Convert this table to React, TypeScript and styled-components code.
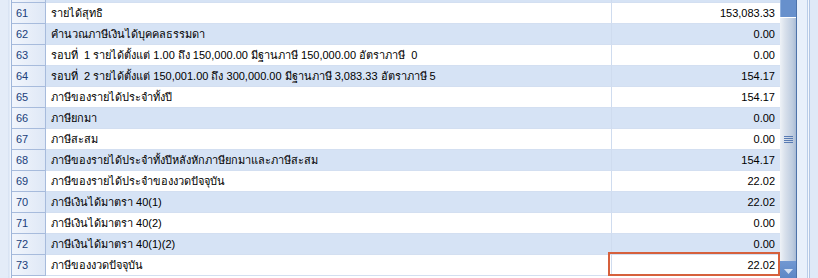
import React from 'react';
import styled, { createGlobalStyle } from 'styled-components';

const GlobalStyle = createGlobalStyle`
  html, body {
    margin: 0;
    padding: 0;
    background: #ffffff;
    overflow: hidden;
  }
  body {
    font-family: Tahoma, "Liberation Sans", "DejaVu Sans", sans-serif;
    font-size: 11px;
  }
`;

interface TaxRow {
  no: number;
  label: string;
  amount: string;
  editing?: boolean;
}

// row 60 only peeks in at the top edge, so it carries no text
const rows: TaxRow[] = [
  { no: 60, label: '', amount: '' },
  { no: 61, label: 'รายได้สุทธิ', amount: '153,083.33' },
  { no: 62, label: 'คำนวณภาษีเงินได้บุคคลธรรมดา', amount: '0.00' },
  { no: 63, label: 'รอบที่  1 รายได้ตั้งแต่ 1.00 ถึง 150,000.00 มีฐานภาษี 150,000.00 อัตราภาษี  0', amount: '0.00' },
  { no: 64, label: 'รอบที่  2 รายได้ตั้งแต่ 150,001.00 ถึง 300,000.00 มีฐานภาษี 3,083.33 อัตราภาษี 5', amount: '154.17' },
  { no: 65, label: 'ภาษีของรายได้ประจำทั้งปี', amount: '154.17' },
  { no: 66, label: 'ภาษียกมา', amount: '0.00' },
  { no: 67, label: 'ภาษีสะสม', amount: '0.00' },
  { no: 68, label: 'ภาษีของรายได้ประจำทั้งปีหลังหักภาษียกมาและภาษีสะสม', amount: '154.17' },
  { no: 69, label: 'ภาษีของรายได้ประจำของงวดปัจจุบัน', amount: '22.02' },
  { no: 70, label: 'ภาษีเงินได้มาตรา 40(1)', amount: '22.02' },
  { no: 71, label: 'ภาษีเงินได้มาตรา 40(2)', amount: '0.00' },
  { no: 72, label: 'ภาษีเงินได้มาตรา 40(1)(2)', amount: '0.00' },
  { no: 73, label: 'ภาษีของงวดปัจจุบัน', amount: '22.02', editing: true },
];

const Frame = styled.div`
  display: flex;
  width: 818px;
  height: 278px;
  overflow: hidden;
`;

const LeftStrip = styled.div`
  width: 11px;
  flex: none;
  background: linear-gradient(to right, #e4ecf8 0, #e4ecf8 8px, #cfdcef 9px, #f3f7fd 10px);
  border-right: 1px solid #9fb6da;
`;

const Viewport = styled.div`
  width: 768px;
  flex: none;
  overflow: hidden;
  background: #ffffff;
`;

const RowList = styled.div`
  margin-top: -18px;
`;

const Row = styled.div<{ $alt: boolean }>`
  display: grid;
  grid-template-columns: 34px 566px 168px;
  height: 21px;
  background: ${p => (p.$alt ? '#d6e3f5' : '#ffffff')};
`;

const RowHeader = styled.div`
  display: flex;
  align-items: center;
  padding-left: 4px;
  background: linear-gradient(to right, #f1f5fc, #dfe8f6);
  border-right: 1px solid #a7bbdc;
  border-bottom: 1px solid #a7bbdc;
  color: #20407a;
`;

const Cell = styled.div<{ $right?: boolean }>`
  position: relative;
  display: flex;
  align-items: center;
  justify-content: ${p => (p.$right ? 'flex-end' : 'flex-start')};
  padding: ${p => (p.$right ? '0 5px 0 0' : '0 0 0 5px')};
  border-right: ${p => (p.$right ? 'none' : '1px solid #cfdcef')};
  border-bottom: 1px solid #d3dff1;
  color: #000000;
  white-space: pre;
`;

const EditBox = styled.div`
  position: absolute;
  left: -4px;
  top: -3px;
  right: 0;
  bottom: -1px;
  border: 2px solid #d6603c;
  pointer-events: none;
`;

const ScrollBar = styled.div`
  width: 16px;
  flex: none;
  display: flex;
  flex-direction: column;
  border-right: 1px solid #4c72aa;
`;

const PageArea = styled.div`
  height: 17px;
  background: #6790cc;
  border-left: 1px solid #8fb0de;
`;

const Thumb = styled.div`
  flex: 1;
  display: flex;
  align-items: center;
  justify-content: center;
  background: linear-gradient(to right, #eef2f7 0%, #d9e1ec 30%, #bccbdf 80%, #a9bbd4 100%);
  border-top: 1px solid #ffffff;
`;

const Grip = styled.div`
  display: flex;
  flex-direction: column;
  gap: 1px;
  span {
    display: block;
    width: 9px;
    height: 1px;
    background: #587bb4;
  }
`;

const ArrowButton = styled.div`
  height: 17px;
  display: flex;
  align-items: center;
  justify-content: center;
  padding-top: 3px;
  box-sizing: border-box;
  background: linear-gradient(to bottom, #7198d2, #5d87c6);
`;

const RightFrame = styled.div`
  flex: 1;
  background: linear-gradient(to right, #e8f0fb 0, #e8f0fb 10px, #b9cde9 10px, #b9cde9 11px, #f4f8fe 11px, #f4f8fe 12px, #b2c6e4 12px, #b2c6e4 13px, #dfe9f7 13px);
`;

export default function App() {
  return (
    <>
      <GlobalStyle />
      <Frame>
        <LeftStrip />
        <Viewport>
          <RowList>
            {rows.map(r => (
              <Row key={r.no} $alt={r.no % 2 === 0}>
                <RowHeader>{r.label ? r.no : ''}</RowHeader>
                <Cell>{r.label}</Cell>
                <Cell $right>
                  {r.amount}
                  {r.editing && <EditBox />}
                </Cell>
              </Row>
            ))}
          </RowList>
        </Viewport>
        <ScrollBar>
          <PageArea />
          <Thumb>
            <Grip>
              <span />
              <span />
              <span />
              <span />
            </Grip>
          </Thumb>
          <ArrowButton>
            <svg width="9" height="5" viewBox="0 0 9 5">
              <path d="M0 0 H9 L4.5 5 Z" fill="#d4e1f3" />
            </svg>
          </ArrowButton>
        </ScrollBar>
        <RightFrame />
      </Frame>
    </>
  );
}
